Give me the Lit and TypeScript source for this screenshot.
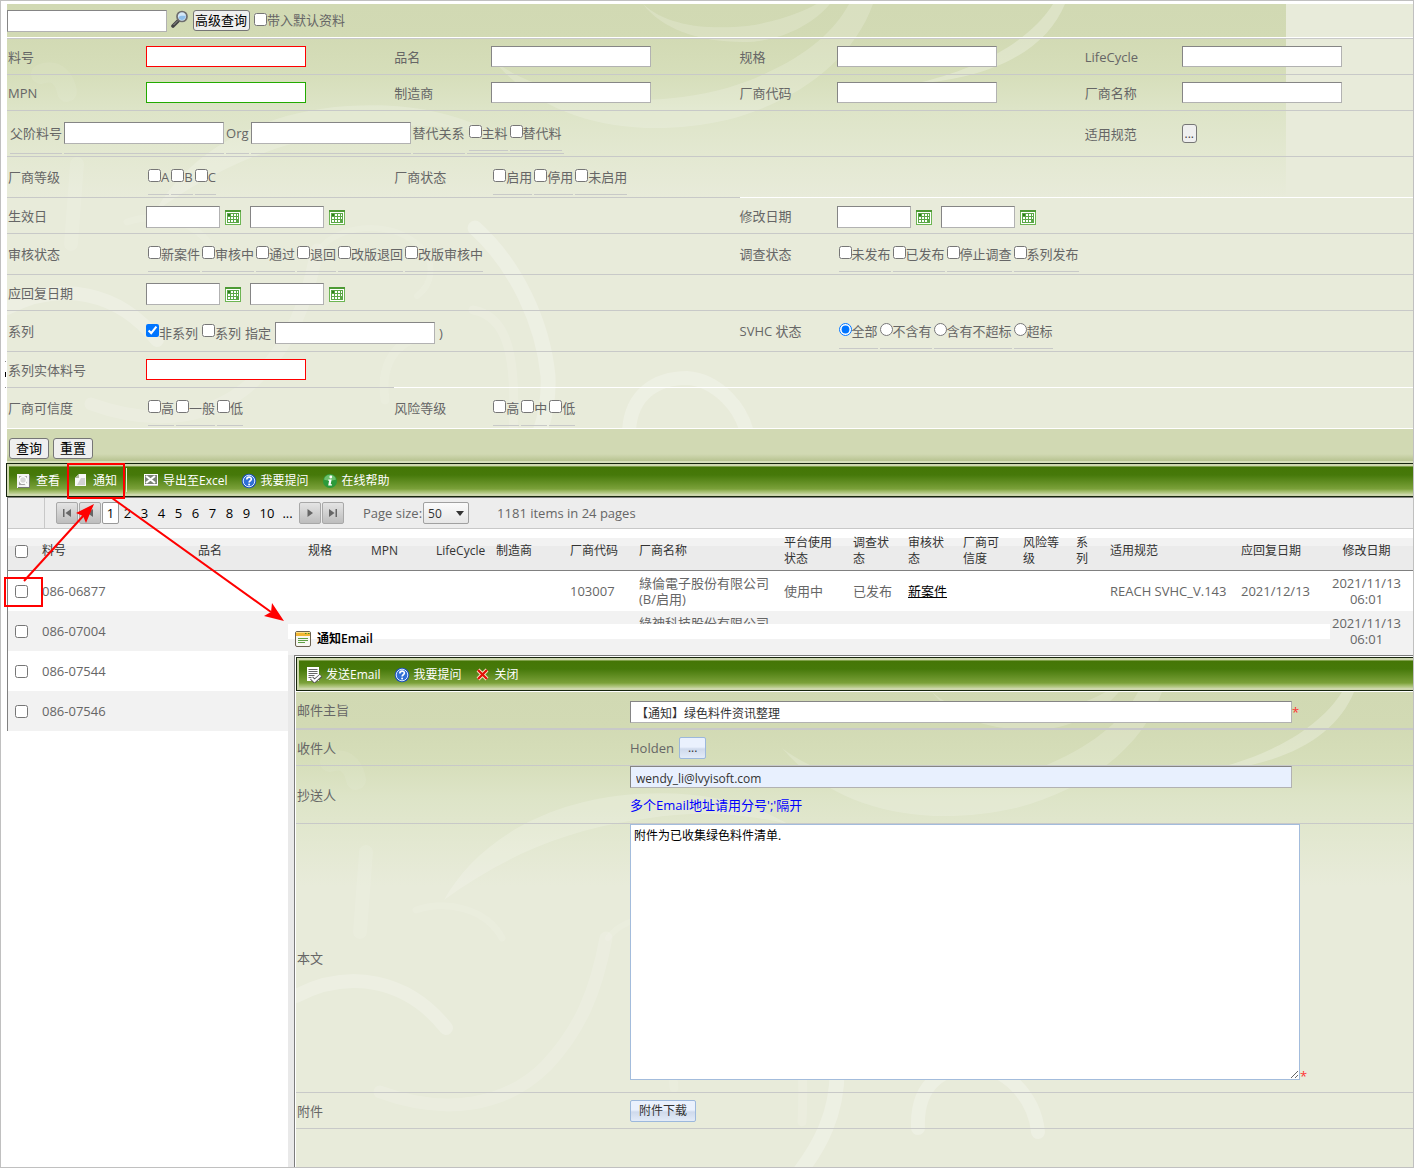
import { LitElement, html, svg, css, nothing, TemplateResult } from "lit";
import { customElement, state } from "lit/decorators.js";

type Body = TemplateResult | string | typeof nothing;

interface PartRow {
  no: string;
  vendorCode: string;
  vendor: string;
  usage: string;
  survey: string;
  review: string;
  spec: string;
  reply: string;
  changed: string;
}

const baseStyles = css`
  * {
    box-sizing: border-box;
  }
  input,
  button,
  select,
  textarea {
    font: inherit;
    margin: 0;
  }
  svg {
    display: block;
    flex: none;
  }
  .text {
    width: 160px;
    height: 21px;
    padding: 0 4px;
    background: #fff;
    border: 1px solid;
    border-color: #858585 #b2b2b2 #b2b2b2 #858585;
    border-radius: 0;
  }
  .tall {
    height: 22px;
  }
  .surface {
    background-color: #e8ebda;
    background-image: linear-gradient(
      #d1d9b3 0,
      #d2dab4 34px,
      #d6deba 70px,
      #dde4c7 104px,
      #e3e8d1 150px,
      #e8ebda 194px
    );
    background-size: 1279px 100%;
    background-repeat: no-repeat;
    position: relative;
    isolation: isolate;
    overflow: hidden;
  }
  .swirls {
    position: absolute;
    left: 0;
    top: 0;
    z-index: -1;
    pointer-events: none;
  }
`;

const swirls = html`<svg class="swirls" width="1279" height="480" viewBox="0 0 1279 480" aria-hidden="true">
  <g fill="none" stroke="#fff" stroke-linecap="round">
    <path d="M636 0C660 22 700 26 740 22C780 16 804 4 816 -4L826 -4C810 18 776 38 736 38C690 38 654 24 636 0Z" fill="#fff" stroke="none" opacity=".18" />
    <path d="M486 56C540 98 640 106 720 84C790 62 826 30 842 0L866 0C846 56 790 98 720 116C630 136 540 120 486 56Z" fill="#fff" stroke="none" opacity=".18" />
    <path d="M1046 0L1058 0C1040 44 990 74 906 80C970 66 1022 38 1046 0Z" fill="#fff" stroke="none" opacity=".26" />
    <path d="M148 208C180 150 250 108 340 102C400 98 450 108 492 132C430 118 390 120 340 128C260 140 200 170 148 208Z" fill="#fff" stroke="none" opacity=".18" />
    <path d="M34 70C50 64 58 76 60 88" stroke-width="20" opacity=".07" />
    <path d="M70 160L64 240" stroke-width="14" opacity=".1" />
    <path d="M468 224C510 262 536 320 541 372C543 420 524 456 496 490" stroke-width="15" opacity=".24" />
    <path d="M466 306C500 312 510 350 506 430" stroke-width="9" opacity=".13" />
    <path d="M622 436C620 388 652 374 680 374C708 376 738 402 742 440" stroke-width="14" opacity=".24" />
    <path d="M0 304C54 276 112 288 150 336" stroke-width="14" opacity=".22" />
    <path d="M84 400C150 424 210 414 250 374C284 338 300 300 310 246" stroke-width="13" opacity=".14" />
    <path d="M312 246C330 222 380 214 410 240C430 256 426 280 410 292" stroke-width="6" opacity=".1" />
    <path d="M120 218C150 208 190 216 206 246" stroke-width="7" opacity=".1" />
    <path d="M378 396C372 354 396 330 424 334" stroke-width="9" opacity=".1" />
  </g>
</svg>`;

const calendarIcon = svg`<svg width="16" height="15" viewBox="0 0 16 15" aria-hidden="true">
  <rect width="16" height="15" fill="#6db553"/><rect width="16" height="2" fill="#4d9a35"/>
  <rect x="1" y="2" width="14" height="12" fill="#fff"/>
  <rect x="2" y="3" width="12" height="10" fill="#5aa746"/>
  <path d="M6 4h2v2H6zM9 4h2v2H9zM3 7h2v2H3zM6 7h2v2H6zM9 7h2v2H9zM12 7h1v2h-1zM3 10h2v2H3zM6 10h2v2H6zM9 10h2v2H9zM12 4h1v2h-1z" fill="#fff"/>
  <path d="M3 4h2v2H3z" fill="#2f7d1e"/>
</svg>`;

const searchIcon = svg`<svg width="18" height="18" viewBox="0 0 18 18" aria-hidden="true">
  <path d="M2 16L8 10" stroke="#444" stroke-width="3.6" stroke-linecap="round"/>
  <path d="M2.500 15L7 10.500" stroke="#999" stroke-width="1"/>
  <circle cx="11" cy="6.500" r="5" fill="#d4e8f8" stroke="#6e6e6e" stroke-width="1.700"/>
  <path d="M7.500 7.500c2-3 5-1 7.300-2c0 5-5.800 6-7.300 2z" fill="#8fbfea"/>
</svg>`;

const viewIcon = svg`<svg width="16" height="16" viewBox="0 0 16 16" aria-hidden="true">
  <path d="M1 1h12v14H1z" fill="#f4f4f4"/><path d="M2 14.500h11.500V2" fill="none" stroke="#777" stroke-width="1"/>
  <path d="M3 3h8v9H3z" fill="#a5a5a5"/>
  <circle cx="7" cy="7" r="3.400" fill="#d8d8d8" stroke="#fff" stroke-width="1.400"/>
  <path d="M9 10l3 3" stroke="#fff" stroke-width="2"/>
</svg>`;

const pageIcon = svg`<svg width="16" height="16" viewBox="0 0 16 16" aria-hidden="true">
  <path d="M6 1h7v12H2V5z" fill="#f7f7f7"/><path d="M6 1L2 5h4z" fill="#aeb8a0"/>
  <path d="M8 5h4v7H4z" fill="#d2d2d2"/>
</svg>`;

const excelIcon = svg`<svg width="16" height="16" viewBox="0 0 16 16" aria-hidden="true">
  <path d="M1 1h14v12H1z" fill="#fff"/><path d="M2 2h12v9H2z" fill="#7c8478"/>
  <path d="M3 3l9 7M12 3l-9 7" stroke="#fff" stroke-width="2.200"/><path d="M1 12.500h14" stroke="#ccc" stroke-width="1"/>
</svg>`;

const helpIcon = svg`<svg width="16" height="16" viewBox="0 0 16 16" aria-hidden="true">
  <circle cx="8" cy="8" r="7.300" fill="#1e52b8"/><circle cx="8" cy="8" r="5.800" fill="#2f6fd6" stroke="#dcebff" stroke-width="1"/>
  <path d="M5.800 6.400c0-3 4.600-2.900 4.600-.3c0 1.600-2.300 1.700-2.300 3.400" fill="none" stroke="#fff" stroke-width="1.600"/>
  <circle cx="8.100" cy="11.500" r="1" fill="#fff"/>
</svg>`;

const infoIcon = svg`<svg width="16" height="16" viewBox="0 0 16 16" aria-hidden="true">
  <circle cx="8" cy="8" r="7" fill="#2c9a3a"/><path d="M2 6.500a6.200 6.200 0 0 1 12 0c-3 1.500-9 1.500-12 0z" fill="#6cc06c"/>
  <circle cx="8.800" cy="4" r="1.400" fill="#fff"/>
  <path d="M6.300 6.500h3.300L8.700 11.300h1.200V12.600H6.200L7.100 7.800H6.300z" fill="#fff"/>
</svg>`;

const sendIcon = svg`<svg width="16" height="16" viewBox="0 0 16 16" aria-hidden="true">
  <path d="M1 0h12v14H1z" fill="#fff"/>
  <path d="M2.500 2.500h9M2.500 4.500h9M2.500 6.500h9M2.500 8.500h6M2.500 10.500h3" stroke="#666" stroke-width="1"/>
  <path d="M5.500 11l3 3L15 8.500" fill="none" stroke="#555" stroke-width="4"/>
  <path d="M5.500 11l3 3L14.500 8.500" fill="none" stroke="#fff" stroke-width="2.200"/>
</svg>`;

const closeIcon = svg`<svg width="16" height="16" viewBox="0 0 16 16" aria-hidden="true">
  <path d="M3 3l9 9M12 3l-9 9" stroke="#fbe9c8" stroke-width="4"/><path d="M3 3l9 9M12 3l-9 9" stroke="#e01208" stroke-width="2.300"/>
</svg>`;

const windowIcon = svg`<svg width="16" height="16" viewBox="0 0 16 16" aria-hidden="true">
  <rect x=".5" y=".5" width="15" height="15" rx="1.500" fill="#f7f7f2" stroke="#6b6250"/>
  <path d="M1 1h14v4H1z" fill="#f2b632"/><path d="M1 1.500h14" stroke="#fbe08c"/>
  <path d="M10 2.500h1.500M13 2.500h1.500" stroke="#4b8f20"/>
  <path d="M3 7.500h10M3 9.500h10M3 11.500h7" stroke="#5f9f45" stroke-width="1"/>
</svg>`;

@customElement("tool-bar")
export class ToolBar extends LitElement {
  static styles = [
    baseStyles,
    css`
      :host {
        display: block;
        border: 1px solid #16240e;
        padding: 2px;
        background: #cdd7ad;
      }
      .bar {
        display: flex;
        align-items: center;
        gap: 13px;
        height: 28px;
        padding: 0 7px;
        background: linear-gradient(#b9ca8c 0, #447606 1px, #46790a 9px, #7ba13a 23px, #8dae50 24px, #c3d29b 28px);
      }
    `,
  ];

  render() {
    return html`<div class="bar" role="toolbar"><slot></slot></div>`;
  }
}

const toolStyles = css`
  .tools {
    border-right: 0;
    padding-right: 0;
  }
  .tool {
    display: flex;
    align-items: center;
    gap: 4px;
    padding: 1px 0 0;
    border: 0;
    background: none;
    color: #fff;
    font-size: 12px;
    line-height: 20px;
  }
`;

@customElement("mail-dialog")
export class MailDialog extends LitElement {
  static styles = [
    baseStyles,
    toolStyles,
    css`
      :host {
        display: flex;
        flex-direction: column;
        background: linear-gradient(#fff 0 15px, #f2f2f2 15px) 0 0 / calc(100% - 84px) 31px no-repeat,
          linear-gradient(#f2f2f2, #f2f2f2) 0 27px / 100% 4px no-repeat;
      }
      .title {
        display: flex;
        align-items: center;
        gap: 6px;
        height: 31px;
        padding: 0 7px 2px;
        margin: 0;
        font-size: 12px;
        font-weight: 600;
        color: #000;
      }
      .frame {
        flex: 1;
        display: flex;
        flex-direction: column;
        margin-left: 6px;
        padding: 1px 0 0 1px;
        border: solid #7c7c7c;
        border-width: 1px 0 0 1px;
        background: #fff;
        box-shadow: -6px 0 0 #e9e9e9;
      }
      .form {
        flex: 1;
        margin-top: 1px;
      }
      .row {
        display: grid;
        grid-template-columns: 333px 1fr;
        align-items: center;
        padding-left: 1px;
        border-bottom: 1px solid #c8c9c8;
        min-height: 36px;
      }
      .subject {
        min-height: 38px;
        border-bottom-width: 2px;
      }
      .field {
        display: flex;
        align-items: center;
        gap: 5px;
      }
      .subject .field {
        gap: 0;
        padding-top: 3px;
      }
      .copy {
        min-height: 58px;
      }
      .copy .field {
        flex-direction: column;
        align-items: flex-start;
        gap: 0;
      }
      .hint {
        line-height: 35px;
        color: #00f;
      }
      .message {
        min-height: 269px;
        align-items: stretch;
      }
      .message label {
        align-self: center;
      }
      .message .field {
        align-items: flex-start;
        gap: 0;
      }
      .message .star {
        align-self: flex-end;
        padding-bottom: 6px;
      }
      .wide {
        width: calc(100% - 122px);
        padding: 2px 5px 0;
        font-size: 12px;
        color: #333;
      }
      .filled {
        background: #e8f0fe;
      }
      .area {
        width: calc(100% - 114px);
        height: 256px;
        padding: 1px 3px;
        border: 1px solid #a3bcdc;
        background: #fff;
        color: #000;
        font-size: 12px;
        line-height: 20px;
      }
      .star {
        color: #f33;
      }
      .blue {
        height: 22px;
        padding: 0 8px;
        border: 1px solid #9cb8dc;
        border-radius: 2px;
        background: linear-gradient(#eaf1fd 0 45%, #cfdaec 55%, #e3ebf8);
        color: #333;
        font-size: 12px;
        line-height: 18px;
      }
    `,
  ];

  render() {
    return html`
      <h2 class="title">${windowIcon}通知Email</h2>
      <div class="frame">
        <tool-bar class="tools">
          <button class="tool">${sendIcon}发送Email</button>
          <button class="tool">${helpIcon}我要提问</button>
          <button class="tool">${closeIcon}关闭</button>
        </tool-bar>
        <form class="form surface">
          ${swirls}
          <div class="row subject">
            <label for="subject">邮件主旨</label>
            <div class="field">
              <input id="subject" class="text tall wide" .value=${"【通知】绿色料件资讯整理"} /><span class="star">*</span>
            </div>
          </div>
          <div class="row">
            <label for="pick">收件人</label>
            <div class="field">Holden<button id="pick" type="button" class="blue">...</button></div>
          </div>
          <div class="row copy">
            <label for="cc">抄送人</label>
            <div class="field">
              <input id="cc" class="text tall wide filled" .value=${"wendy_li@lvyisoft.com"} />
              <span class="hint">多个Email地址请用分号';'隔开</span>
            </div>
          </div>
          <div class="row message">
            <label for="body">本文</label>
            <div class="field">
              <textarea id="body" class="area" .value=${"附件为已收集绿色料件清单."}></textarea><span class="star">*</span>
            </div>
          </div>
          <div class="row">
            <label for="file">附件</label>
            <div class="field"><button id="file" type="button" class="blue">附件下载</button></div>
          </div>
        </form>
      </div>
    `;
  }
}

@customElement("app-root")
export class AppRoot extends LitElement {
  static styles = [
    baseStyles,
    toolStyles,
    css`
      :host {
        display: block;
        position: relative;
        min-height: 100vh;
        padding: 3px 0 0 6px;
        border: 1px solid #c0c0c0;
        background: #fff;
        overflow: hidden;
        box-sizing: border-box;
        color: #666;
        font: 13px/20px "Open Sans", "Noto Sans CJK SC", sans-serif;
      }
      .quick {
        display: flex;
        align-items: center;
        height: 34px;
        border-bottom: 1px solid #fff;
      }
      .icon {
        display: flex;
        padding: 0;
        border: 0;
        background: none;
      }
      .find {
        margin: 0 4px 4px;
      }
      .plain {
        height: 21px;
        padding: 0 1px;
        border: 1px solid #767676;
        border-radius: 3px;
        background: #efefef;
        color: #000;
        line-height: 17px;
      }
      .quick .plain {
        padding-right: 2px;
      }
      .check {
        display: inline-flex;
        align-items: center;
        white-space: nowrap;
      }
      .check input {
        width: 13px;
        height: 13px;
        margin-bottom: 2px;
      }
      .default {
        margin-left: 4px;
      }
      .criteria {
        border-top: 1px solid #c8c9c8;
      }
      .line {
        display: grid;
        grid-template-columns: 139px 248fr 97px 248fr 97px 248fr 97px 231fr;
        min-height: 36px;
      }
      .mid {
        min-height: 41px;
      }
      .high {
        min-height: 46px;
      }
      .cell {
        display: flex;
        align-items: center;
        min-width: 0;
        border-bottom: 1px solid #c8c9c8;
        white-space: nowrap;
      }
      .cell:first-child {
        padding-left: 1px;
      }
      .light,
      .last .cell {
        border-color: #fff;
      }
      .s2 {
        grid-column: span 2;
      }
      .s3 {
        grid-column: span 3;
      }
      .s4 {
        grid-column: span 4;
      }
      .s5 {
        grid-column: span 5;
      }
      .s6 {
        grid-column: span 6;
      }
      .s7 {
        grid-column: span 7;
      }
      .group {
        display: flex;
        align-self: stretch;
        gap: 2px;
        padding: 2px;
      }
      .slot {
        display: flex;
        align-items: center;
        border-bottom: 1px solid #c8c9c8;
      }
      .dates {
        display: flex;
        align-items: center;
        padding-top: 3px;
      }
      .date {
        width: 74px;
      }
      .dates .icon {
        margin: 0 9px 0 5px;
      }
      .series {
        display: flex;
        align-items: center;
        gap: 4px;
        padding-top: 3px;
      }
      .series .check input {
        margin-bottom: 4px;
      }
      .red {
        border-color: #f00;
      }
      .green {
        border-color: #2a0;
      }
      .more {
        height: 19px;
        width: 15px;
        color: #444;
        font-size: 12px;
      }
      .actions {
        display: flex;
        align-items: flex-start;
        gap: 4px;
        height: 34px;
        padding: 9px 2px 0;
        background: linear-gradient(#d1d9b3 0 25px, #b8c391 32px, #d6dfba 32px);
      }
      .action {
        width: 40px;
      }
      .main {
        margin-left: -1px;
      }
      .rule {
        width: 1px;
        height: 24px;
        margin: 0 3px 0 -4px;
        background: #e7eed6;
      }
      .results {
        border-left: 1px solid #808080;
        border-top: 1px solid #808080;
      }
      .pager {
        display: flex;
        align-items: center;
        height: 31px;
        border-bottom: 1px solid #c8c8c8;
        background: #ededed;
      }
      .lead {
        width: 37px;
        align-self: stretch;
        margin-right: 11px;
        border-right: 1px solid #c8c8c8;
      }
      .step {
        display: grid;
        place-items: center;
        width: 22px;
        height: 22px;
        margin-right: 1px;
        padding: 0;
        border: 1px solid #a8a8a8;
        border-radius: 2px;
        background: linear-gradient(#e4e4e4, #bdbdbd);
      }
      .page {
        min-width: 17px;
        text-align: center;
        color: #000;
        text-decoration: none;
        line-height: 20px;
        border: 1px solid transparent;
      }
      .ten {
        min-width: 24px;
      }
      .gap {
        margin-right: 3px;
      }
      .current {
        border-color: #999;
        border-radius: 2px;
        background: #fff;
      }
      .size {
        margin: 0 1px 0 18px;
      }
      .drop {
        display: grid;
        align-items: center;
        margin-right: 28px;
      }
      .drop select,
      .drop svg {
        grid-area: 1 / 1;
      }
      .drop svg {
        justify-self: end;
        margin-right: 5px;
        pointer-events: none;
      }
      .drop select {
        appearance: none;
        width: 46px;
        height: 22px;
        padding: 1px 4px 0;
        border: 1px solid #a0a0a0;
        border-radius: 2px;
        background: linear-gradient(#fbfbfb, #e6e6e6);
        color: #333;
        font-size: 12px;
      }
      .grid {
        width: 100%;
        table-layout: fixed;
        border-collapse: separate;
        border-spacing: 0;
        line-height: 16px;
      }
      .head {
        background: linear-gradient(#fff 0 9px, #f2f2f2 9px 17px, #ebebeb 17px);
        color: #333;
        font-size: 12px;
      }
      th,
      td {
        padding: 0 14px 0 0;
        height: 40px;
      }
      th {
        height: 42px;
        padding-top: 3px;
        border-bottom: 1px solid #808080;
        font-weight: 400;
        text-align: left;
      }
      .pick {
        padding-left: 7px;
        padding-right: 0;
      }
      .pick input {
        display: block;
        width: 13px;
        height: 13px;
      }
      .keep {
        white-space: nowrap;
      }
      .when {
        padding-right: 0;
        text-align: center;
      }
      .alt {
        background: #f2f2f2;
      }
      .state {
        color: #000;
      }
      .dialog {
        position: absolute;
        left: 287px;
        right: -1px;
        top: 623px;
        bottom: -1px;
      }
      .marks {
        position: absolute;
        left: -1px;
        top: -1px;
        pointer-events: none;
      }
      @media (max-width: 900px) {
        .cell {
          white-space: normal;
        }
      }
    `,
  ];

  @state() private rows: PartRow[] = [
    { no: "086-06877", vendorCode: "103007", vendor: "綠倫電子股份有限公司(B/启用)", usage: "使用中", survey: "已发布", review: "新案件", spec: "REACH SVHC_V.143", reply: "2021/12/13", changed: "2021/11/13 06:01" },
    { no: "086-07004", vendorCode: "", vendor: "綠神科技股份有限公司(B/启用)", usage: "", survey: "", review: "", spec: "", reply: "", changed: "2021/11/13 06:01" },
    { no: "086-07544", vendorCode: "", vendor: "", usage: "", survey: "", review: "", spec: "", reply: "", changed: "" },
    { no: "086-07546", vendorCode: "", vendor: "", usage: "", survey: "", review: "", spec: "", reply: "", changed: "" },
  ];

  private columns: [string, number, string][] = [
    ["料号", 156, ""],
    ["品名", 110, ""],
    ["规格", 63, ""],
    ["MPN", 65, ""],
    ["LifeCycle", 60, "keep"],
    ["制造商", 74, ""],
    ["厂商代码", 69, ""],
    ["厂商名称", 145, ""],
    ["平台使用状态", 69, ""],
    ["调查状态", 55, ""],
    ["审核状态", 55, ""],
    ["厂商可信度", 60, ""],
    ["风险等级", 53, ""],
    ["系列", 34, ""],
    ["适用规范", 131, ""],
    ["应回复日期", 79, "keep"],
    ["修改日期", 93, "when"],
  ];

  private cell(span: number, body: Body, light = false) {
    return html`<div class="cell s${span} ${light ? "light" : ""}">${body}</div>`;
  }

  private field(id: string, label: string, tone = "") {
    return html`<div class="cell"><label for=${id}>${label}</label></div>
      <div class="cell"><input id=${id} class="text ${tone}" /></div>`;
  }

  private check(text: string, checked = false) {
    return html`<label class="check"><input type="checkbox" .checked=${checked} />${text}</label>`;
  }

  private checks(items: string[]) {
    return html`<div class="group">${items.map((t) => html`<span class="slot">${this.check(t)}</span>`)}</div>`;
  }

  private dates(name: string) {
    return html`<div class="dates">
      ${["起", "迄"].map(
        (end) => html`<input class="text tall date" aria-label=${name + end} />
          <button class="icon" aria-label=${name + end + "日历"}>${calendarIcon}</button>`
      )}
    </div>`;
  }

  private step(label: string, shape: string) {
    return html`<button class="step" aria-label=${label}>
      <svg width="10" height="10" viewBox="0 0 10 10"><path d=${shape} fill="#666" /></svg>
    </button>`;
  }

  private criteria() {
    return html`<div class="criteria">
      <div class="line">
        ${this.field("part", "料号", "red")} ${this.field("name", "品名")} ${this.field("spec", "规格")}
        ${this.field("life", "LifeCycle")}
      </div>
      <div class="line">
        ${this.field("mpn", "MPN", "green")} ${this.field("maker", "制造商")} ${this.field("vcode", "厂商代码")}
        ${this.field("vname", "厂商名称")}
      </div>
      <div class="line high">
        ${this.cell(
          4,
          html`<div class="group">
            <label class="slot" for="parent">父阶料号</label>
            <span class="slot"><input id="parent" class="text tall" /></span>
            <label class="slot" for="org">Org</label>
            <span class="slot"><input id="org" class="text tall" /></span>
            <span class="slot">替代关系</span>
            <span class="slot">${this.checks(["主料", "替代料"])}</span>
          </div>`
        )}
        ${this.cell(2, nothing)} ${this.cell(1, html`<label for="norm">适用规范</label>`)}
        ${this.cell(1, html`<button id="norm" class="plain more">...</button>`)}
      </div>
      <div class="line mid">
        ${this.cell(1, "厂商等级")} ${this.cell(1, this.checks(["A", "B", "C"]))} ${this.cell(1, "厂商状态")}
        ${this.cell(1, this.checks(["启用", "停用", "未启用"]))} ${this.cell(4, nothing, true)}
      </div>
      <div class="line">
        ${this.cell(1, "生效日")} ${this.cell(3, this.dates("生效日"))} ${this.cell(1, "修改日期")}
        ${this.cell(3, this.dates("修改日期"))}
      </div>
      <div class="line mid">
        ${this.cell(1, "审核状态")}
        ${this.cell(3, this.checks(["新案件", "审核中", "通过", "退回", "改版退回", "改版审核中"]))}
        ${this.cell(1, "调查状态")} ${this.cell(3, this.checks(["未发布", "已发布", "停止调查", "系列发布"]))}
      </div>
      <div class="line">${this.cell(1, "应回复日期")} ${this.cell(7, this.dates("应回复日期"))}</div>
      <div class="line mid">
        ${this.cell(1, "系列")}
        ${this.cell(
          3,
          html`<div class="series">
            ${this.check("非系列", true)} ${this.check("系列")} <label for="series">指定</label>
            <input id="series" class="text tall" /> )
          </div>`
        )}
        ${this.cell(1, "SVHC 状态")}
        ${this.cell(
          3,
          html`<div class="group">
            ${["全部", "不含有", "含有不超标", "超标"].map(
              (t, i) =>
                html`<span class="slot"
                  ><label class="check"><input type="radio" name="svhc" .checked=${i === 0} />${t}</label></span
                >`
            )}
          </div>`
        )}
      </div>
      <div class="line">
        ${this.cell(1, html`<label for="entity">系列实体料号</label>`)}
        ${this.cell(1, html`<input id="entity" class="text red" />`)} ${this.cell(6, nothing, true)}
      </div>
      <div class="line mid last">
        ${this.cell(1, "厂商可信度")} ${this.cell(1, this.checks(["高", "一般", "低"]))} ${this.cell(1, "风险等级")}
        ${this.cell(5, this.checks(["高", "中", "低"]))}
      </div>
    </div>`;
  }

  private pager() {
    return html`<nav class="pager">
      <span class="lead"></span>
      ${this.step("首页", "M1 1h1.500v8H1zM9 1v8L3.500 5z")} ${this.step("上一页", "M8 1v8L2.500 5z")}
      ${[1, 2, 3, 4, 5, 6, 7, 8, 9, 10].map(
        (n) => html`<a href="#" class="page ${n === 1 ? "current" : ""} ${n === 10 ? "ten" : ""}">${n}</a>`
      )}
      <a href="#" class="page gap">...</a>
      ${this.step("下一页", "M2.500 1v8L8 5z")} ${this.step("末页", "M1 1v8l5.500-4zM7.500 1H9v8H7.500z")}
      <label class="size" for="size">Page size:</label>
      <span class="drop">
        <select id="size">
          <option>50</option>
        </select>
        <svg width="8" height="5" viewBox="0 0 8 5"><path d="M0 0h8L4 5z" fill="#333" /></svg>
      </span>
      <span>1181 items in 24 pages</span>
    </nav>`;
  }

  private table() {
    return html`<table class="grid">
      <colgroup>
        <col width="34" />
        ${this.columns.map((c) => html`<col width=${c[1]} />`)}
      </colgroup>
      <thead>
        <tr class="head">
          <th class="pick"><input type="checkbox" aria-label="全选" /></th>
          ${this.columns.map((c) => html`<th class=${c[2]}>${c[0]}</th>`)}
        </tr>
      </thead>
      <tbody>
        ${this.rows.map(
          (r, i) => html`<tr class=${i % 2 ? "alt" : ""}>
            <td class="pick"><input type="checkbox" aria-label=${r.no} /></td>
            <td>${r.no}</td>
            <td></td>
            <td></td>
            <td></td>
            <td></td>
            <td></td>
            <td>${r.vendorCode}</td>
            <td>${r.vendor}</td>
            <td>${r.usage}</td>
            <td class="keep">${r.survey}</td>
            <td class="keep">${r.review ? html`<a class="state" href="#">${r.review}</a>` : nothing}</td>
            <td></td>
            <td></td>
            <td></td>
            <td class="keep">${r.spec}</td>
            <td class="keep">${r.reply}</td>
            <td class="when">${r.changed}</td>
          </tr>`
        )}
      </tbody>
    </table>`;
  }

  render() {
    return html`
      <section class="surface">
        ${swirls}
        <div class="quick">
          <input class="text tall" aria-label="快速查询" />
          <button class="icon find" aria-label="搜索">${searchIcon}</button>
          <button class="plain">高级查询</button>
          <span class="default">${this.check("带入默认资料")}</span>
        </div>
        ${this.criteria()}
      </section>
      <div class="actions">
        <button class="plain action">查询</button>
        <button class="plain action">重置</button>
      </div>
      <tool-bar class="tools main">
        <button class="tool">${viewIcon}查看</button>
        <button class="tool">${pageIcon}通知</button>
        <span class="rule"></span>
        <button class="tool">${excelIcon}导出至Excel</button>
        <button class="tool">${helpIcon}我要提问</button>
        <button class="tool">${infoIcon}在线帮助</button>
      </tool-bar>
      <section class="results">${this.pager()} ${this.table()}</section>
      <mail-dialog class="dialog" role="dialog" aria-label="通知Email"></mail-dialog>
      <svg class="marks" width="320" height="640" viewBox="0 0 320 640" aria-hidden="true">
        <path d="M5.500 372v5" stroke="#000" stroke-width="1" />
        <path d="M5 361.500h1M5 387.500h1" stroke="#888" stroke-width="1" />
        <g fill="none" stroke="#f00" stroke-width="2">
          <rect x="68" y="464" width="56" height="34" />
          <rect x="5" y="578" width="37" height="28" />
          <path d="M24 581L84 515M112 498L271 612" />
        </g>
        <path d="M94 504L86 523L83 516L76 513ZM284 621L264 616L271 612L272 603Z" fill="#f00" />
      </svg>
    `;
  }
}
